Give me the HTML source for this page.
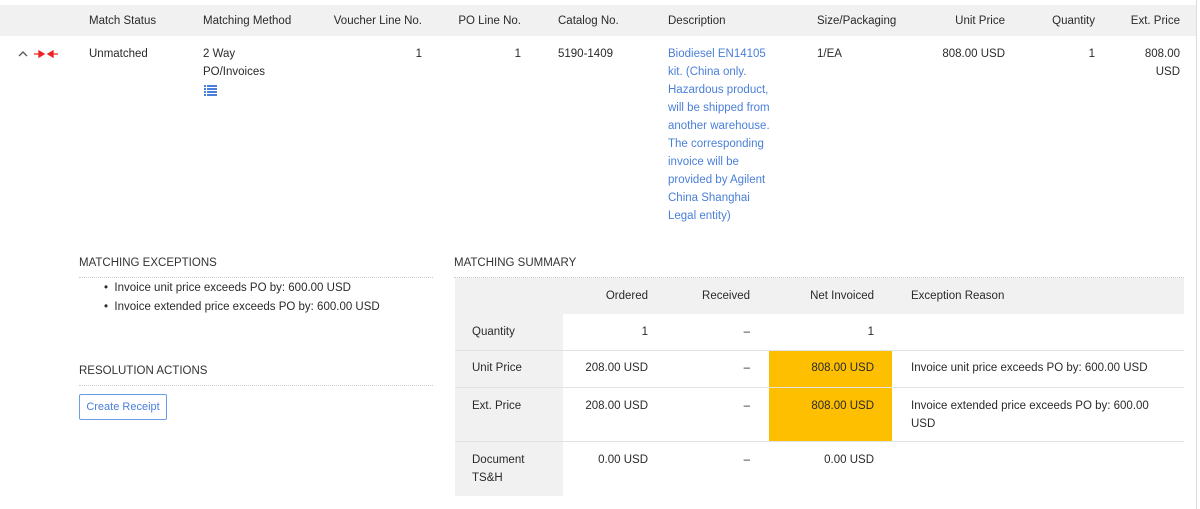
<!DOCTYPE html>
<html><head><style>
body{margin:0;width:1200px;height:509px;background:#fff;font-family:"Liberation Sans",sans-serif;font-size:11.5px;color:#2a2a2a;position:relative;overflow:hidden}
.a{position:absolute;white-space:nowrap;line-height:18px}
.r{text-align:right}
.hd{position:absolute;left:0;top:5px;width:1197px;height:31px;background:#f1f1f1}
.vl{position:absolute;left:1196px;top:0;width:1px;height:509px;background:#ddd}
.sec{font-size:11.5px;color:#333}
.dot{position:absolute;height:0;border-top:1px dotted #ccc}
.g{position:absolute;background:#f1f1f1}
.hl{position:absolute;height:1px;background:#e2e2e2}
</style></head><body>
<div class="hd"></div>
<div class="vl"></div>
<div class="a" style="left:89px;top:12px">Match Status</div>
<div class="a" style="left:203px;top:12px">Matching Method</div>
<div class="a r" style="left:320px;width:102px;top:12px">Voucher Line No.</div>
<div class="a r" style="left:440px;width:81px;top:12px">PO Line No.</div>
<div class="a" style="left:558px;top:12px">Catalog No.</div>
<div class="a" style="left:668px;top:12px">Description</div>
<div class="a" style="left:817px;top:12px">Size/Packaging</div>
<div class="a r" style="left:920px;width:85px;top:12px">Unit Price</div>
<div class="a r" style="left:1030px;width:65px;top:12px">Quantity</div>
<div class="a r" style="left:1110px;width:70px;top:12px">Ext. Price</div>

<svg style="position:absolute;left:18px;top:50px" width="10" height="7"><path d="M1 6L5 2L9 6" stroke="#555" fill="none" stroke-width="1.3"/></svg>
<svg style="position:absolute;left:34px;top:50px" width="24" height="8"><path d="M0 4H10M5 1L10 4L5 7Z M24 4H14M19 1L14 4L19 7Z" stroke="#e22" fill="#e22" stroke-width="1.3"/></svg>
<div class="a" style="left:89px;top:45px">Unmatched</div>
<div class="a" style="left:203px;top:45px">2 Way<br>PO/Invoices</div>
<svg style="position:absolute;left:204px;top:85px" width="13" height="11"><g fill="#4a7fd9"><rect x="0" y="0" width="2" height="2"/><rect x="3" y="0" width="10" height="2"/><rect x="0" y="3" width="2" height="2"/><rect x="3" y="3" width="10" height="2"/><rect x="0" y="6" width="2" height="2"/><rect x="3" y="6" width="10" height="2"/><rect x="0" y="9" width="2" height="2"/><rect x="3" y="9" width="10" height="2"/></g></svg>
<div class="a r" style="left:320px;width:102px;top:45px">1</div>
<div class="a r" style="left:440px;width:81px;top:45px">1</div>
<div class="a" style="left:558px;top:45px">5190-1409</div>
<div class="a" style="left:668px;top:45px;color:#4a7fd9">Biodiesel EN14105<br>kit. (China only.<br>Hazardous product,<br>will be shipped from<br>another warehouse.<br>The corresponding<br>invoice will be<br>provided by Agilent<br>China Shanghai<br>Legal entity)</div>
<div class="a" style="left:817px;top:45px">1/EA</div>
<div class="a r" style="left:920px;width:85px;top:45px">808.00 USD</div>
<div class="a r" style="left:1030px;width:65px;top:45px">1</div>
<div class="a r" style="left:1110px;width:70px;top:45px">808.00<br>USD</div>

<div class="a sec" style="left:79px;top:254px">MATCHING EXCEPTIONS</div>
<div class="dot" style="left:79px;top:277px;width:354px"></div>
<div class="a" style="left:104px;top:279px">&bull;&nbsp; Invoice unit price exceeds PO by: 600.00 USD</div>
<div class="a" style="left:104px;top:298px">&bull;&nbsp; Invoice extended price exceeds PO by: 600.00 USD</div>
<div class="a sec" style="left:79px;top:362px">RESOLUTION ACTIONS</div>
<div class="dot" style="left:79px;top:385px;width:354px"></div>
<div style="position:absolute;left:79px;top:394px;width:86px;height:24px;border:1.5px solid #6b9ce6;border-radius:2px;color:#4a7fd9;font-size:11px;line-height:24px;text-align:center">Create Receipt</div>

<div class="a sec" style="left:454px;top:254px">MATCHING SUMMARY</div>
<div class="dot" style="left:454px;top:277px;width:730px"></div>
<div class="g" style="left:455px;top:278px;width:729px;height:36px"></div>
<div class="g" style="left:455px;top:314px;width:108px;height:182px"></div>
<div style="position:absolute;left:769px;top:351px;width:123px;height:91px;background:#fdbf00"></div>
<div class="hl" style="left:455px;top:350px;width:729px"></div>
<div class="hl" style="left:455px;top:387px;width:729px"></div>
<div class="hl" style="left:455px;top:441px;width:729px"></div>
<div class="a r" style="left:560px;width:88px;top:287px">Ordered</div>
<div class="a r" style="left:660px;width:90px;top:287px">Received</div>
<div class="a r" style="left:770px;width:104px;top:287px">Net Invoiced</div>
<div class="a" style="left:911px;top:287px">Exception Reason</div>
<div class="a" style="left:472px;top:323px">Quantity</div>
<div class="a r" style="left:560px;width:88px;top:323px">1</div>
<div class="a r" style="left:660px;width:90px;top:323px">–</div>
<div class="a r" style="left:770px;width:104px;top:323px">1</div>
<div class="a" style="left:472px;top:359px">Unit Price</div>
<div class="a r" style="left:560px;width:88px;top:359px">208.00 USD</div>
<div class="a r" style="left:660px;width:90px;top:359px">–</div>
<div class="a r" style="left:770px;width:104px;top:359px">808.00 USD</div>
<div class="a" style="left:911px;top:359px">Invoice unit price exceeds PO by: 600.00 USD</div>
<div class="a" style="left:472px;top:397px">Ext. Price</div>
<div class="a r" style="left:560px;width:88px;top:397px">208.00 USD</div>
<div class="a r" style="left:660px;width:90px;top:397px">–</div>
<div class="a r" style="left:770px;width:104px;top:397px">808.00 USD</div>
<div class="a" style="left:911px;top:397px">Invoice extended price exceeds PO by: 600.00<br>USD</div>
<div class="a" style="left:472px;top:451px">Document<br>TS&amp;H</div>
<div class="a r" style="left:560px;width:88px;top:451px">0.00 USD</div>
<div class="a r" style="left:660px;width:90px;top:451px">–</div>
<div class="a r" style="left:770px;width:104px;top:451px">0.00 USD</div>
</body></html>
